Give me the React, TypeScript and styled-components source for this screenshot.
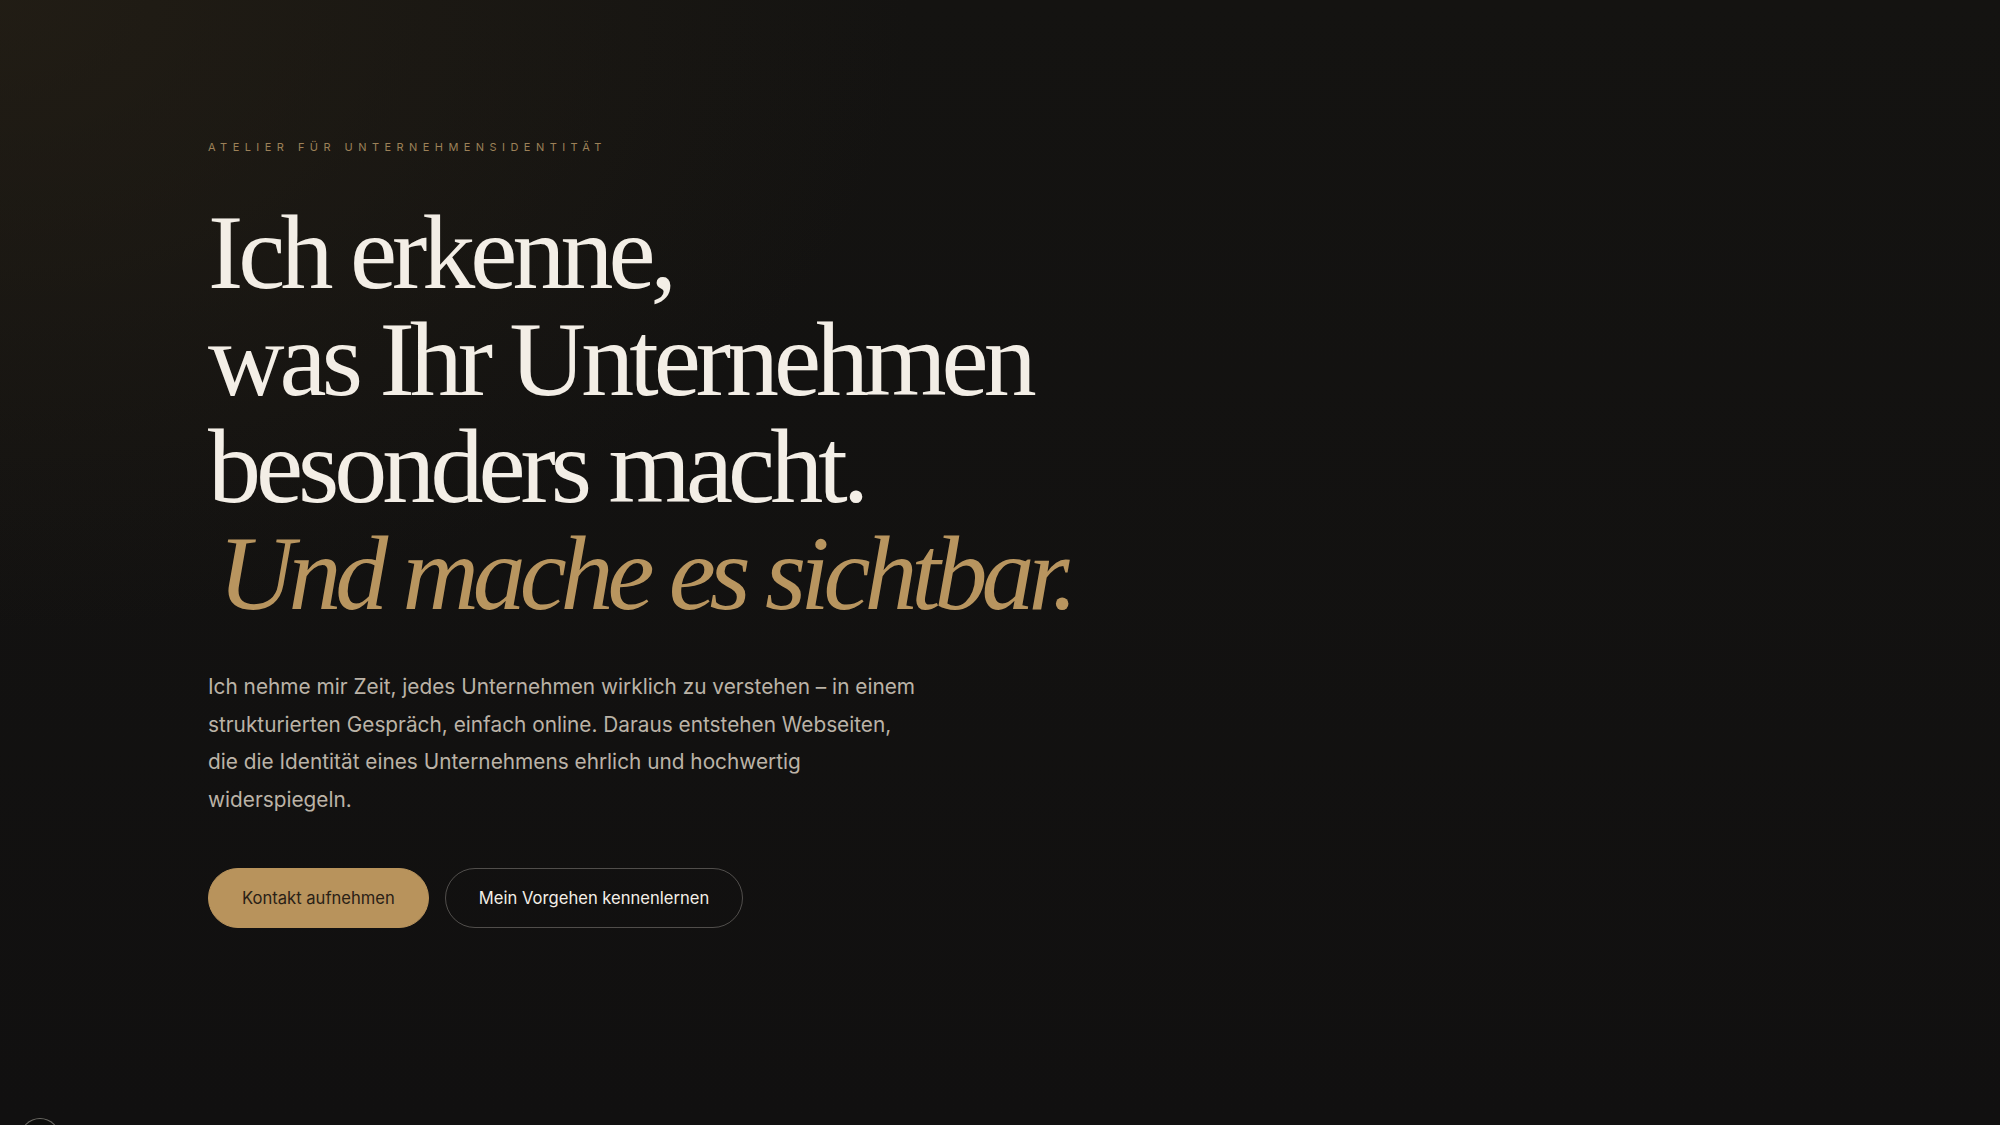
import styled, { createGlobalStyle } from 'styled-components';

const GlobalStyle = createGlobalStyle`
  * {
    box-sizing: border-box;
  }
  html, body {
    margin: 0;
    padding: 0;
    background: #111010;
  }
  body {
    font-family: Inter, 'Noto Sans', sans-serif;
    -webkit-font-smoothing: antialiased;
  }
`;

const Page = styled.main`
  min-height: 1125px;
  padding: 140px 0 0 208px;
  background:
    radial-gradient(ellipse 1300px 900px at 0% 0%, rgba(42, 35, 23, 0.6), rgba(42, 35, 23, 0) 70%),
    linear-gradient(180deg, #141311 0%, #111010 100%);
  overflow: hidden;
`;

const Hero = styled.section`
  display: flex;
  flex-direction: column;
  align-items: flex-start;
`;

const Eyebrow = styled.p`
  margin: 0;
  font-family: Inter, sans-serif;
  font-size: 11px;
  line-height: 14px;
  letter-spacing: 0.495em;
  text-transform: uppercase;
  color: #9c8158;
`;

const Headline = styled.h1`
  margin: 45px 0 0;
  font-family: 'Liberation Serif', 'Times New Roman', serif;
  font-weight: 400;
  font-size: 106px;
  line-height: 107px;
  letter-spacing: -0.047em;
  color: #f3eee6;
`;

const Accent = styled.em`
  display: inline-block;
  margin-left: 10px;
  font-style: italic;
  letter-spacing: -0.058em;
  color: #b8955f;
`;

const Lead = styled.p`
  margin: 41px 0 0;
  max-width: 713px;
  font-size: 20.8px;
  line-height: 37.5px;
  color: #bbb3a7;
`;

const Actions = styled.div`
  display: flex;
  gap: 16px;
  margin-top: 50px;
`;

const Button = styled.a<{ $primary?: boolean }>`
  display: inline-flex;
  align-items: center;
  justify-content: center;
  height: 60px;
  padding: 0 33px;
  border-radius: 999px;
  font-size: 16.6px;
  font-weight: 400;
  text-decoration: none;
  cursor: pointer;
  background: ${(p) => (p.$primary ? '#b8935c' : 'transparent')};
  color: ${(p) => (p.$primary ? '#2a2116' : '#f3eee6')};
  border: 1px solid ${(p) => (p.$primary ? '#b8935c' : 'rgba(243, 238, 230, 0.28)')};
`;

const CornerBadge = styled.div`
  position: fixed;
  left: 20px;
  bottom: -33px;
  width: 40px;
  height: 40px;
  border-radius: 50%;
  background: #0d0d0c;
  border: 1.5px solid rgba(220, 215, 205, 0.45);
`;

export default function App() {
  return (
    <>
      <GlobalStyle />
      <Page>
        <Hero>
          <Eyebrow>Atelier für Unternehmensidentität</Eyebrow>
          <Headline>
            Ich erkenne,
            <br />
            was Ihr Unternehmen
            <br />
            besonders macht.
            <br />
            <Accent>Und mache es sichtbar.</Accent>
          </Headline>
          <Lead>
            Ich nehme mir Zeit, jedes Unternehmen wirklich zu verstehen – in einem
            strukturierten Gespräch, einfach online. Daraus entstehen Webseiten,
            die die Identität eines Unternehmens ehrlich und hochwertig
            widerspiegeln.
          </Lead>
          <Actions>
            <Button $primary>Kontakt aufnehmen</Button>
            <Button>Mein Vorgehen kennenlernen</Button>
          </Actions>
        </Hero>
      </Page>
      <CornerBadge />
    </>
  );
}
